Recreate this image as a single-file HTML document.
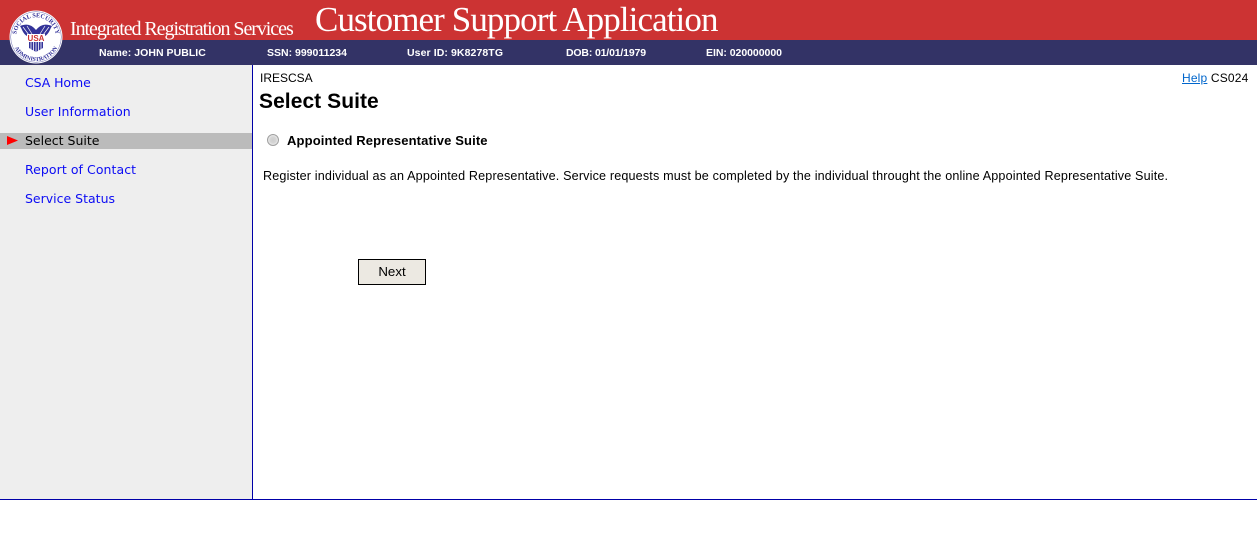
<!DOCTYPE html>
<html><head><meta charset="utf-8"><title>Customer Support Application</title>
<style>
html,body{margin:0;padding:0;background:#fff;width:1257px;height:536px;overflow:hidden}
body{position:relative;font-family:"Liberation Sans",Arial,sans-serif;color:#000}
div,a,span{position:absolute;white-space:nowrap}
.s{font-family:"Liberation Serif",serif;color:#fff}
.u{top:47px;font-size:10.500px;line-height:12px;font-weight:bold;color:#fff}
.n{left:25px;font-family:"DejaVu Sans",sans-serif;font-size:12.500px;line-height:16px;color:#0c0cf4;text-decoration:none}
</style></head><body>
<div style="left:0;top:0;width:1257px;height:40px;background:#cc3333"></div>
<div style="left:0;top:40px;width:1257px;height:25px;background:#333366"></div>
<svg style="position:absolute;left:9px;top:10px" width="54" height="54" viewBox="0 0 54 54">
<defs><path id="t" d="M9 36A20 20 0 1 1 45 36"/><path id="b" d="M3 27A24 24 0 0 0 51 27"/></defs>
<circle cx="27" cy="27" r="26.500" fill="#fff"/>
<circle cx="27" cy="27" r="25.300" fill="none" stroke="#6a6ab0" stroke-width=".5"/>
<text font-family="Liberation Serif" font-size="6.200" font-weight="bold" fill="#333399"><textPath href="#t" startOffset="50%" text-anchor="middle">SOCIAL SECURITY</textPath></text>
<text font-family="Liberation Serif" font-size="5.800" font-weight="bold" fill="#333399"><textPath href="#b" startOffset="50%" text-anchor="middle">ADMINISTRATION</textPath></text>
<path d="M27 20C23 15 18 13 11 16C13 19 14 24 18 26L36 26C40 24 41 19 43 16C36 13 31 15 27 20Z" fill="#333399"/>
<path d="M14 17L20 25M18 16L23 24M40 17L34 25M36 16L31 24" stroke="#fff" stroke-width=".7"/>
<rect x="18" y="24" width="18" height="8" fill="#fff"/>
<text x="27" y="31" font-family="Liberation Sans" font-size="8" font-weight="bold" fill="#cc3333" text-anchor="middle">USA</text>
<path d="M20 32H34V38L27 42L20 38Z" fill="#333399"/>
<path d="M22 32V40M24.500 32V41M27 32V43M29.500 32V41M32 32V40" stroke="#fff" stroke-width=".8"/>
</svg>
<div class="s" style="left:70px;top:17px;font-size:20px;line-height:24px;letter-spacing:-1.06px">Integrated Registration Services</div>
<div class="s" style="left:315px;top:1px;font-size:35px;line-height:38px;letter-spacing:-.9px">Customer Support Application</div>
<div class="u" style="left:99px;letter-spacing:.04px">Name: JOHN PUBLIC</div>
<div class="u" style="left:267px;letter-spacing:.0px">SSN: 999011234</div>
<div class="u" style="left:407px;letter-spacing:.09px">User ID: 9K8278TG</div>
<div class="u" style="left:566px;letter-spacing:-.16px">DOB: 01/01/1979</div>
<div class="u" style="left:706px;letter-spacing:-.04px">EIN: 020000000</div>

<div style="left:0;top:65px;width:252px;height:434px;background:#eeeeee"></div>
<div style="left:252px;top:65px;width:1px;height:434px;background:#0000a8"></div>
<div style="left:0;top:499px;width:1257px;height:1px;background:#0000a8"></div>
<div style="left:0;top:133px;width:252px;height:16px;background:#bbbbbb"></div>
<svg style="position:absolute;left:7px;top:136px" width="11" height="9"><path d="M0 0L11 4.500L0 9Z" fill="#f00"/></svg>
<a class="n" style="top:75px;letter-spacing:-.08px">CSA Home</a>
<a class="n" style="top:104px;letter-spacing:.06px">User Information</a>
<a class="n" style="top:133px;color:#000">Select Suite</a>
<a class="n" style="top:162px;letter-spacing:.06px">Report of Contact</a>
<a class="n" style="top:191px">Service Status</a>

<div style="left:260px;top:71px;font-size:12px;line-height:14px">IRESCSA</div>
<div style="left:259px;top:89px;font-size:21px;line-height:25px;font-weight:bold;letter-spacing:.06px">Select Suite</div>
<div style="left:1182px;top:71px;font-size:12px;line-height:14px;letter-spacing:.17px"><span style="position:static;color:#0066cc;text-decoration:underline">Help</span> CS024</div>
<div style="left:267px;top:134px;width:12px;height:12px;border-radius:50%;box-sizing:border-box;border:1px solid #a0a0a0;background:radial-gradient(circle at 50% 50%,#cfcfcf 0,#d4d4d4 40%,#ececec 75%,#f8f8f8 100%)"></div>
<div style="left:287px;top:133px;font-size:13px;line-height:15px;font-weight:bold;letter-spacing:.14px">Appointed Representative Suite</div>
<div style="left:263px;top:169px;font-size:12.600px;line-height:15px;letter-spacing:.157px">Register individual as an Appointed Representative. Service requests must be completed by the individual throught the online Appointed Representative Suite.</div>
<div style="left:358px;top:259px;width:68px;height:26px;box-sizing:border-box;border:1px solid #000;background:#ece9e2;font-size:13.300px;line-height:23px;text-align:center">Next</div>
</body></html>
